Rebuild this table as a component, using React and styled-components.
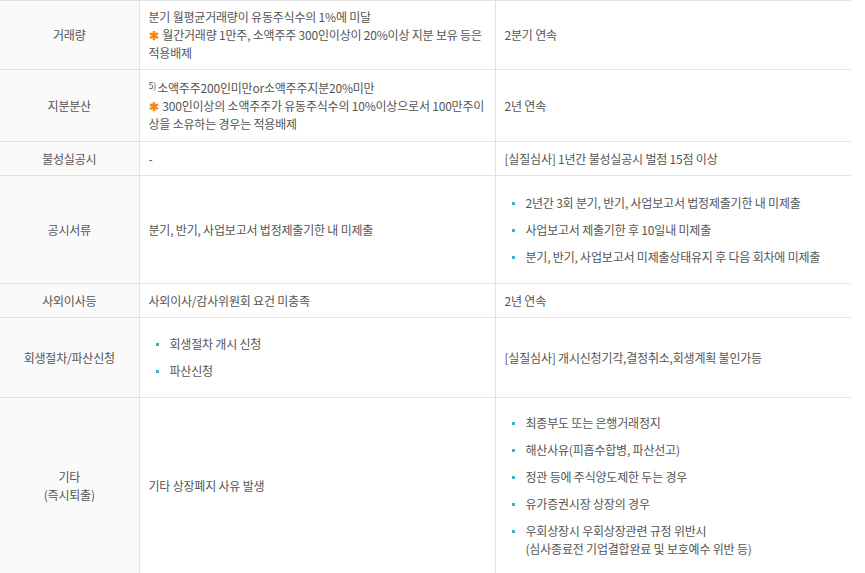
import React from "react";
import styled, { createGlobalStyle } from "styled-components";

const GlobalStyle = createGlobalStyle`
  html, body {
    margin: 0;
    padding: 0;
    background: #fff;
  }
  body {
    font-family: "Noto Sans CJK KR", "Noto Sans", sans-serif;
    color: #555;
  }
`;

const Table = styled.table`
  width: 851px;
  border-collapse: collapse;
  table-layout: fixed;
  font-size: 12px;
  line-height: 18px;
  letter-spacing: -0.2px;
  border-top: 1px solid #e3e3e3;
`;

const Row = styled.tr`
  border-bottom: 1px solid #e3e3e3;
  height: ${props => props.h}px;
`;

const HeadCell = styled.th`
  width: 139px;
  background: #fafafa;
  border-right: 1px solid #e3e3e3;
  color: #555;
  font-weight: 400;
  text-align: center;
  vertical-align: middle;
  padding: 6px 4px;
  box-sizing: border-box;
`;

const Cell = styled.td`
  border-right: ${props => (props.last ? "none" : "1px solid #e3e3e3")};
  padding: 6px 9px;
  vertical-align: middle;
  text-align: left;
  word-break: keep-all;
  color: #555;
`;

const Mark = styled.span`
  color: #f08a1c;
  font-weight: 700;
  margin-right: 4px;
`;

const Sup = styled.sup`
  font-size: 9px;
  line-height: 0;
  vertical-align: 4px;
  margin-right: 1px;
`;

const BulletList = styled.ul`
  list-style: none;
  margin: 0;
  padding: ${props => props.pad || 10}px 0 ${props => props.pad || 10}px 7px;
`;

const BulletItem = styled.li`
  position: relative;
  padding-left: 14px;
  margin-bottom: 9px;
  &:last-child {
    margin-bottom: 0;
  }
  &::before {
    content: "";
    position: absolute;
    left: 0;
    top: 8px;
    width: 3px;
    height: 3px;
    background: #3ab0c8;
  }
`;

const Bullets = ({ items, pad }) => (
  <BulletList pad={pad}>
    {items.map((it, i) => (
      <BulletItem key={i}>{it}</BulletItem>
    ))}
  </BulletList>
);

export default function App() {
  return (
    <>
      <GlobalStyle />
      <Table>
        <tbody>
          <Row h={69}>
            <HeadCell>거래량</HeadCell>
            <Cell>
              분기 월평균거래량이 유동주식수의 1%에 미달
              <br />
              <Mark>✱</Mark>월간거래량 1만주, 소액주주 300인이상이 20%이상 지분 보유 등은
              <br />
              적용배제
            </Cell>
            <Cell last>2분기 연속</Cell>
          </Row>
          <Row h={72}>
            <HeadCell>지분분산</HeadCell>
            <Cell>
              <Sup>5)</Sup>소액주주200인미만or소액주주지분20%미만
              <br />
              <Mark>✱</Mark>300인이상의 소액주주가 유동주식수의 10%이상으로서 100만주이
              <br />
              상을 소유하는 경우는 적용배제
            </Cell>
            <Cell last>2년 연속</Cell>
          </Row>
          <Row h={34}>
            <HeadCell>불성실공시</HeadCell>
            <Cell>-</Cell>
            <Cell last>[실질심사] 1년간 불성실공시 벌점 15점 이상</Cell>
          </Row>
          <Row h={108}>
            <HeadCell>공시서류</HeadCell>
            <Cell>분기, 반기, 사업보고서 법정제출기한 내 미제출</Cell>
            <Cell last>
              <Bullets
                pad={6}
                items={[
                  "2년간 3회 분기, 반기, 사업보고서 법정제출기한 내 미제출",
                  "사업보고서 제출기한 후 10일내 미제출",
                  "분기, 반기, 사업보고서 미제출상태유지 후 다음 회차에 미제출",
                ]}
              />
            </Cell>
          </Row>
          <Row h={34}>
            <HeadCell>사외이사등</HeadCell>
            <Cell>사외이사/감사위원회 요건 미충족</Cell>
            <Cell last>2년 연속</Cell>
          </Row>
          <Row h={80}>
            <HeadCell>회생절차/파산신청</HeadCell>
            <Cell>
              <Bullets pad={8} items={["회생절차 개시 신청", "파산신청"]} />
            </Cell>
            <Cell last>[실질심사] 개시신청기각,결정취소,회생계획 불인가등</Cell>
          </Row>
          <Row h={176}>
            <HeadCell>
              기타
              <br />
              (즉시퇴출)
            </HeadCell>
            <Cell>기타 상장폐지 사유 발생</Cell>
            <Cell last>
              <Bullets
                pad={9}
                items={[
                  "최종부도 또는 은행거래정지",
                  "해산사유(피흡수합병, 파산선고)",
                  "정관 등에 주식양도제한 두는 경우",
                  "유가증권시장 상장의 경우",
                  <>
                    우회상장시 우회상장관련 규정 위반시
                    <br />
                    (심사종료전 기업결합완료 및 보호예수 위반 등)
                  </>,
                ]}
              />
            </Cell>
          </Row>
        </tbody>
      </Table>
    </>
  );
}
